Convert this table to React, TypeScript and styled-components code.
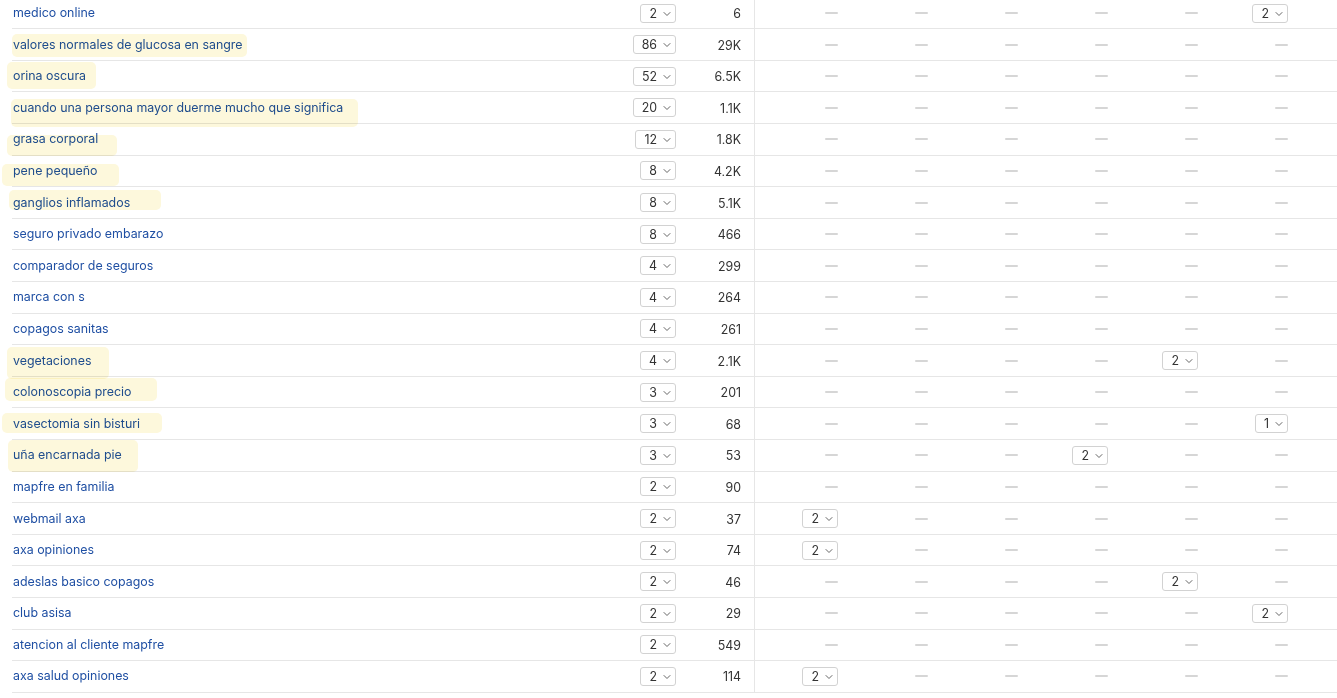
import React from 'react'
import styled, { createGlobalStyle } from 'styled-components'
import { ChevronDown } from 'lucide-react'

type Mark = { l: number; r: number; t: number; h: number }

type Row = {
  keyword: string
  pos: number
  volume: string
  cols?: { [k: number]: number }
  mark?: Mark
}

const rows: Row[] = [
  { keyword: 'medico online', pos: 2, volume: '6', cols: { 5: 2 } },
  { keyword: 'valores normales de glucosa en sangre', pos: 86, volume: '29K', mark: { l: 0, r: 247, t: 5, h: 23 } },
  { keyword: 'orina oscura', pos: 52, volume: '6.5K', mark: { l: -5, r: 96, t: 1, h: 27 } },
  { keyword: 'cuando una persona mayor duerme mucho que significa', pos: 20, volume: '1.1K', mark: { l: -1, r: 358, t: 6.5, h: 28 } },
  { keyword: 'grasa corporal', pos: 12, volume: '1.8K', mark: { l: -5, r: 117, t: 11, h: 21 } },
  { keyword: 'pene pequeño', pos: 8, volume: '4.2K', mark: { l: -10, r: 119, t: 8.5, h: 21.5 } },
  { keyword: 'ganglios inflamados', pos: 8, volume: '5.1K', mark: { l: -3, r: 161, t: 3, h: 20 } },
  { keyword: 'seguro privado embarazo', pos: 8, volume: '466' },
  { keyword: 'comparador de seguros', pos: 4, volume: '299' },
  { keyword: 'marca con s', pos: 4, volume: '264' },
  { keyword: 'copagos sanitas', pos: 4, volume: '261' },
  { keyword: 'vegetaciones', pos: 4, volume: '2.1K', cols: { 4: 2 }, mark: { l: -5, r: 109, t: 2, h: 32 } },
  { keyword: 'colonoscopia precio', pos: 3, volume: '201', mark: { l: -7, r: 157, t: 1.5, h: 23 } },
  { keyword: 'vasectomia sin bisturi', pos: 3, volume: '68', cols: { 5: 1 }, mark: { l: -10, r: 162, t: 5, h: 20 } },
  { keyword: 'uña encarnada pie', pos: 3, volume: '53', cols: { 3: 2 }, mark: { l: -4, r: 138, t: 0, h: 31.5 } },
  { keyword: 'mapfre en familia', pos: 2, volume: '90' },
  { keyword: 'webmail axa', pos: 2, volume: '37', cols: { 0: 2 } },
  { keyword: 'axa opiniones', pos: 2, volume: '74', cols: { 0: 2 } },
  { keyword: 'adeslas basico copagos', pos: 2, volume: '46', cols: { 4: 2 } },
  { keyword: 'club asisa', pos: 2, volume: '29', cols: { 5: 2 } },
  { keyword: 'atencion al cliente mapfre', pos: 2, volume: '549' },
  { keyword: 'axa salud opiniones', pos: 2, volume: '114', cols: { 0: 2 } },
]

const GlobalStyle = createGlobalStyle`
  html, body {
    margin: 0;
    padding: 0;
    background: #fff;
    overflow: hidden;
  }
  body {
    font-family: Inter, "Noto Sans", sans-serif;
    font-size: 12.4px;
    color: #333;
  }
`

const Table = styled.div`
  margin-top: -2.3px;
  padding-left: 12px;
  display: flex;
  flex-direction: column;
`

const RowLine = styled.div`
  display: grid;
  grid-template-columns: 1fr 76px 79px repeat(6, 90px) 42px;
  height: 31.6px;
  box-sizing: border-box;
  border-bottom: 1px solid #e6e6e6;
`

const KeywordCell = styled.div`
  position: relative;
  display: flex;
  align-items: center;
  padding: 0 0 1px 1px;
`

const Keyword = styled.a`
  color: #1f4fa3;
  text-decoration: none;
  white-space: nowrap;
  cursor: pointer;
`

const Highlight = styled.span`
  position: absolute;
  background: #fdf8dc;
  border-radius: 5px;
  mix-blend-mode: multiply;
  pointer-events: none;
`

const PosCell = styled.div`
  display: flex;
  align-items: center;
  justify-content: flex-end;
`

const VolumeCell = styled.div`
  display: flex;
  align-items: center;
  justify-content: flex-end;
  padding-right: 13px;
  border-right: 1px solid #e6e6e6;
  box-sizing: border-box;
  margin-bottom: -1px;
`

const ValueCell = styled.div`
  display: flex;
  align-items: center;
  justify-content: flex-end;
  padding-right: 7px;
`

const Dash = styled.span`
  display: block;
  width: 13px;
  height: 2px;
  background: #d6d6d6;
  border-radius: 1px;
`

const Select = styled.button`
  display: inline-flex;
  align-items: center;
  gap: 4px;
  height: 19px;
  padding: 0 2px 0 8px;
  border: 1px solid #d2d2d2;
  border-radius: 3px;
  background: #fff;
  font-family: inherit;
  font-size: 12.4px;
  color: #333;
  box-sizing: border-box;
  cursor: pointer;

  svg {
    color: #666;
    margin-top: 1px;
  }
`

const Spacer = styled.div``

const Pos: React.FC<{ value: number }> = ({ value }) => (
  <Select>
    {value}
    <ChevronDown size={12} strokeWidth={2} />
  </Select>
)

export default function App() {
  return (
    <>
      <GlobalStyle />
      <Table>
        {rows.map(row => (
          <RowLine key={row.keyword}>
            <KeywordCell>
              <Keyword>{row.keyword}</Keyword>
              {row.mark && (
                <Highlight
                  style={{
                    left: row.mark.l,
                    width: row.mark.r - 12 - row.mark.l,
                    top: row.mark.t,
                    height: row.mark.h,
                  }}
                />
              )}
            </KeywordCell>
            <PosCell>
              <Pos value={row.pos} />
            </PosCell>
            <VolumeCell>{row.volume}</VolumeCell>
            {[0, 1, 2, 3, 4, 5].map(i => (
              <ValueCell key={i}>
                {row.cols && row.cols[i] !== undefined ? (
                  <Pos value={row.cols[i]} />
                ) : (
                  <Dash />
                )}
              </ValueCell>
            ))}
            <Spacer />
          </RowLine>
        ))}
      </Table>
    </>
  )
}
